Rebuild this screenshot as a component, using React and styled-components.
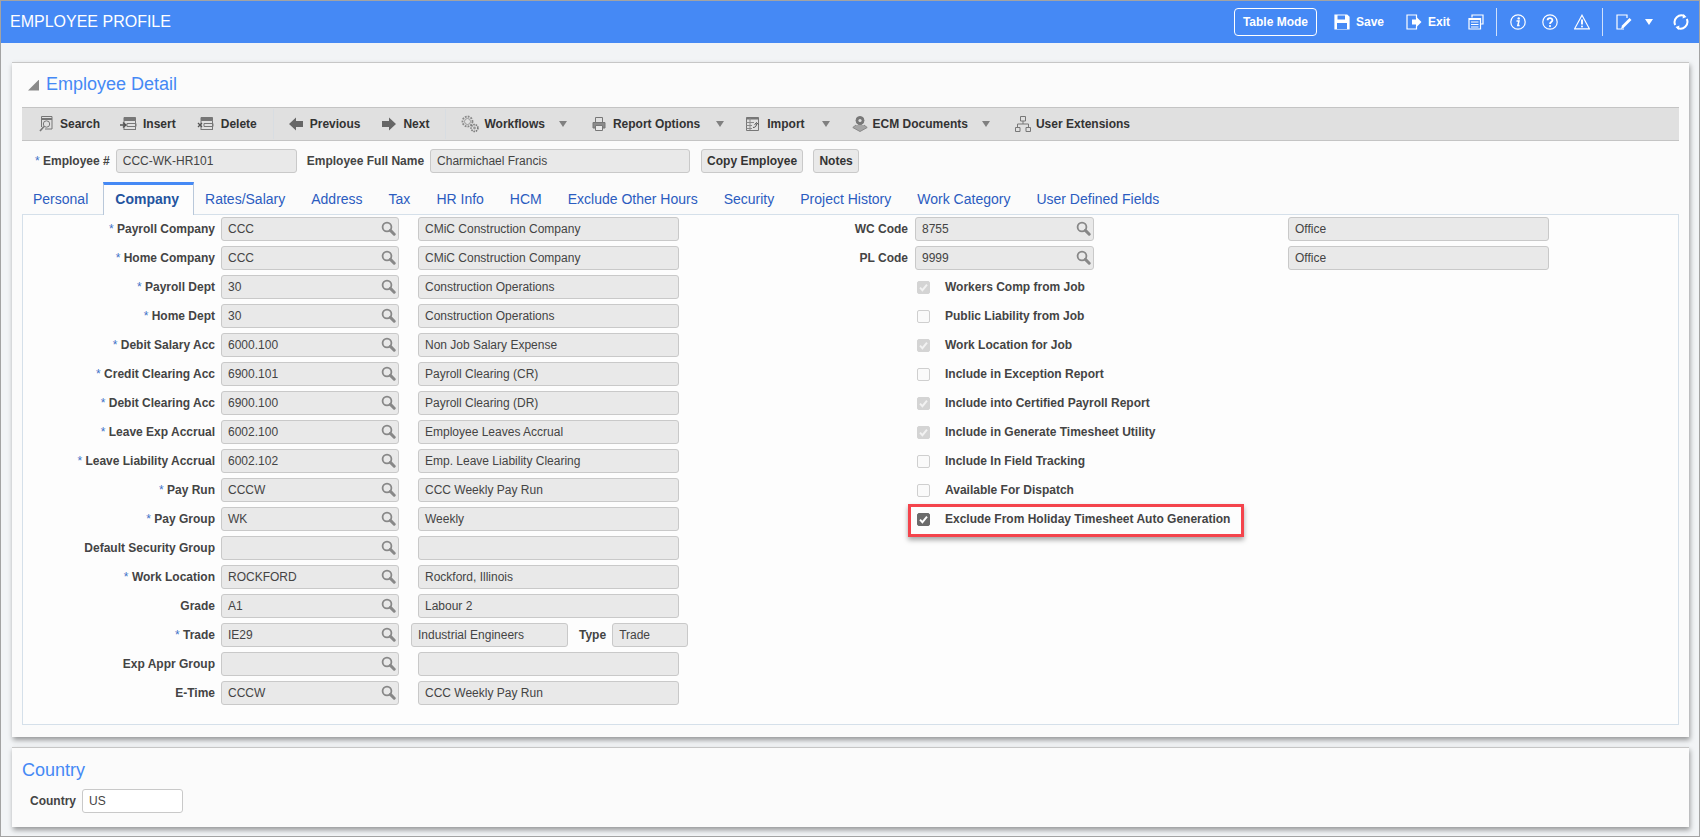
import React from "react";
import styled, { createGlobalStyle } from "styled-components";

const GlobalStyle = createGlobalStyle`
  html, body {
    margin: 0;
    padding: 0;
    background: #f2f4f6;
  }
  * {
    box-sizing: border-box;
  }
`;

const Page = styled.div`
  width: 1700px;
  height: 837px;
  border: 1px solid #a3a3a3;
  background: #f2f4f6;
  font-family: "Liberation Sans", Arial, sans-serif;
  overflow: hidden;
`;

const Header = styled.header`
  height: 42px;
  background: #4589f5;
  color: #fff;
  display: flex;
  align-items: center;
  padding-left: 9px;
`;

const HeaderTitle = styled.div`
  font-size: 16px;
  flex: 1;
`;

const HeaderActions = styled.div`
  display: flex;
  align-items: center;
  height: 100%;
`;

const TableModeButton = styled.button`
  width: 83px;
  height: 28px;
  margin-right: 17px;
  border: 1px solid #fff;
  border-radius: 4px;
  background: transparent;
  color: #fff;
  font: bold 12px "Liberation Sans", Arial, sans-serif;
  padding: 0;
`;

const HeaderAction = styled.div`
  display: flex;
  align-items: center;
  gap: ${(p) => p.$gap ?? 7}px;
  margin-right: ${(p) => p.$after ?? 16}px;
  font-size: 12px;
  font-weight: bold;
`;

const HeaderDivider = styled.div`
  width: 1px;
  height: 28px;
  background: #cfe0fb;
  margin-right: 13px;
`;

const Body = styled.main`
  padding: 19px 10px 0 11px;
  display: flex;
  flex-direction: column;
  gap: 10px;
`;

const Panel = styled.section`
  height: ${(p) => p.$height}px;
  background: #fbfbfb;
  border-top: 1px solid #c6c6c6;
  box-shadow: 1px 3px 5px rgba(0, 0, 0, 0.38);
  padding: 0 10px;
`;

const TitleRow = styled.div`
  height: 44px;
  display: flex;
  align-items: center;
  gap: 7px;
  padding: 0 0 1px 6px;
`;

const Disclosure = styled.span`
  width: 11px;
  height: 11px;
  margin-top: 1px;
  background: #8a8a8a;
  clip-path: polygon(100% 0, 100% 100%, 0 100%);
`;

const PanelTitle = styled.h2`
  margin: 0;
  font-size: 18px;
  font-weight: normal;
  color: #4589f5;
`;

const Toolbar = styled.div`
  height: 34px;
  background: #e0e0e0;
  border-top: 1px solid #c4c4c4;
  border-bottom: 1px solid #c4c4c4;
  display: flex;
  align-items: center;
  gap: 22px;
  padding-left: 17px;
`;

const ToolItem = styled.div`
  display: flex;
  align-items: center;
  gap: ${(p) => p.$gap ?? 7}px;
  margin-right: ${(p) => p.$after ?? 0}px;
  font-size: 12px;
  font-weight: bold;
  color: #333;
`;

const ToolDivider = styled.span`
  width: 1px;
  height: 30px;
  background: #d8dde2;
  margin: 0 -7px 0 -6px;
`;

const ToolCaret = styled.span`
  width: 0;
  height: 0;
  margin-left: 9px;
  border-left: 4.5px solid transparent;
  border-right: 4.5px solid transparent;
  border-top: 6px solid #808080;
`;

const EmployeeRow = styled.div`
  display: flex;
  align-items: center;
  margin-top: 8px;
  height: 24px;
  padding-left: 13px;
`;

const Label = styled.label`
  font-size: 12px;
  font-weight: bold;
  color: #444;
  white-space: nowrap;
  text-align: right;
  width: ${(p) => (p.$width ? `${p.$width}px` : "auto")};
  margin: ${(p) => p.$margin || "0 6px 0 0"};
  flex: none;
`;

const Star = styled.span`
  color: #3f72c8;
  font-weight: normal;
`;

const Field = styled.div`
  width: ${(p) => p.$width}px;
  height: 24px;
  flex: none;
  margin-left: ${(p) => p.$left || 0}px;
  display: flex;
  align-items: center;
  justify-content: space-between;
  padding: 0 2px 1px 6px;
  background: ${(p) => (p.$white ? "#fff" : "#e9e9e9")};
  border: 1px solid #c9c9c9;
  border-radius: 3px;
  font-size: 12px;
  color: #444;
  white-space: nowrap;
`;

const SmallButton = styled.button`
  height: 24px;
  width: ${(p) => p.$width}px;
  margin-left: ${(p) => p.$left}px;
  padding: 0;
  background: #e9e9e9;
  border: 1px solid #c9c9c9;
  border-radius: 3px;
  font: bold 12px "Liberation Sans", Arial, sans-serif;
  color: #333;
`;

const TabStrip = styled.div`
  display: flex;
  height: 32px;
  margin-top: 9px;
`;

const Tab = styled.div`
  font-size: 14px;
  color: #2b5cc0;
  padding: 1px 13px 0;
  display: flex;
  align-items: center;
  white-space: nowrap;

  &:first-child {
    padding-left: 11px;
  }
`;

const ActiveTab = styled(Tab)`
  position: relative;
  z-index: 1;
  height: 33px;
  margin: 0 -2px 0 2px;
  padding: 0 14px 2px 11px;
  font-weight: bold;
  color: #24549f;
  background: #fdfdfd;
  border-top: 3px solid #4589f5;
  border-left: 1px solid #b9c8da;
  border-right: 1px solid #b9c8da;
`;

const TabBody = styled.div`
  height: 511px;
  background: #fdfdfd;
  border: 1px solid #d5e0ea;
  padding-top: 2px;
  display: flex;
`;

const Column = styled.div`
  width: ${(p) => p.$width}px;
  flex: none;
  display: flex;
  flex-direction: column;
  gap: 5px;
`;

const FormRow = styled.div`
  display: flex;
  align-items: center;
  height: 24px;
`;

const CheckRow = styled.div`
  display: flex;
  align-items: center;
  flex: none;
  height: ${(p) => (p.$highlight ? 33 : 24)}px;
  margin-left: ${(p) => (p.$highlight ? 108 : 114)}px;
  padding-left: ${(p) => (p.$highlight ? 3 : 0)}px;
  font-size: 12px;
  font-weight: bold;
  color: #444;
  ${(p) =>
    p.$highlight &&
    `
    width: 336px;
    margin-top: -3px;
    margin-bottom: -6px;
    padding-bottom: 3px;
    border: 3px solid #f4444c;
    box-shadow: 0 3px 5px rgba(0, 0, 0, 0.35);
  `}
`;

const CheckBox = styled.span`
  width: 13px;
  height: 13px;
  margin: 0 15px 0 3px;
  flex: none;
  border-radius: 2px;
  border: 1px solid ${(p) => (p.$on ? (p.$active ? "#6b6b6b" : "#d4d4d4") : "#cfcfcf")};
  background: ${(p) => (p.$on ? (p.$active ? "#6b6b6b" : "#d4d4d4") : "#fafafa")};
  display: flex;
  align-items: center;
  justify-content: center;
`;

const CountryTitle = styled(PanelTitle)`
  height: 41px;
  padding-top: 11px;
  line-height: 22px;
`;

const CountryRow = styled.div`
  display: flex;
  align-items: center;
  padding-left: 8px;
`;

const MagnifierIcon = () => (
  <svg width="15" height="15" viewBox="0 0 15 15" fill="none">
    <circle cx="6" cy="6" r="4.4" stroke="#888" strokeWidth="1.8" />
    <path d="M9.4 9.4L13.2 13.2" stroke="#888" strokeWidth="3" strokeLinecap="round" />
  </svg>
);

const CheckMark = ({ active }) => (
  <svg width="11" height="11" viewBox="0 0 11 11" fill="none">
    <path d="M2 5.6L4.4 8.2L9 2.6" stroke={active ? "#fff" : "#f2f2f2"} strokeWidth="1.9" />
  </svg>
);

const ToolSvg = ({ w = 16, children }) => (
  <svg width={w} height="18" viewBox={`0 0 ${w} 18`} fill="none" stroke="#777" strokeWidth="1">
    {children}
  </svg>
);

const SearchDocIcon = () => (
  <ToolSvg w={14}>
    <path d="M2.5 12V1.5H13V14H6" />
    <path d="M2.5 4H13" strokeWidth="2" />
    <circle cx="7.5" cy="9" r="3.2" />
    <path d="M5 11.5L1 16" strokeWidth="1.6" />
  </ToolSvg>
);

const RowsIcon = ({ mark }) => (
  <ToolSvg w={17}>
    <path d="M4 2.5H15.5V5.5H4z" fill="#777" />
    <path d="M7 8.5H16V11.5H7z" />
    <path d="M4 14.5H15.5M4 5.5V15M15.5 5.5V15" />
    {mark === "arrow" ? (
      <path d="M0 10H4.5M3 7.5L5.8 10L3 12.5" stroke="#555" strokeWidth="1.6" />
    ) : (
      <path d="M1 8L5 12M5 8L1 12" stroke="#555" strokeWidth="1.3" />
    )}
  </ToolSvg>
);

const ArrowIcon = ({ dir }) => (
  <svg width="14" height="14" viewBox="0 0 14 14" fill="#666">
    <path d={dir === "left" ? "M7 0.5V4H14V10H7V13.5L0 7z" : "M7 0.5V4H0V10H7V13.5L14 7z"} />
  </svg>
);

const GearsIcon = () => (
  <ToolSvg w={18}>
    <circle cx="6.5" cy="6.5" r="5" stroke="#888" strokeWidth="1.8" strokeDasharray="1.8 1.1" />
    <circle cx="6.5" cy="6.5" r="3" stroke="#999" />
    <circle cx="13.5" cy="13" r="3.4" stroke="#777" strokeWidth="1.6" strokeDasharray="1.5 0.9" />
    <circle cx="13.5" cy="13" r="1.4" fill="#999" stroke="none" />
  </ToolSvg>
);

const PrinterIcon = () => (
  <ToolSvg w={14}>
    <path d="M3.5 7V2.5H10.5V7" />
    <path d="M1 7.5H13V13H1z" fill="#8b8b8b" />
    <path d="M3.5 10.5H10.5V15.5H3.5z" fill="#e8e8e8" />
  </ToolSvg>
);

const ImportIcon = () => (
  <ToolSvg w={13}>
    <path d="M0.5 2.5H12.5V15.5H0.5z" />
    <path d="M0.5 3.5H12.5" strokeWidth="2" />
    <path d="M0.5 7.5H8M0.5 10.5H6M0.5 13.5H6M4 3V15" stroke="#8a8a8a" />
    <path d="M7 12.5C10 12.5 10.5 10.5 10.5 8.5M8.6 9.8L10.5 7.5L12.6 9.8" stroke="#555" />
  </ToolSvg>
);

const EcmIcon = () => (
  <ToolSvg w={16}>
    <circle cx="8" cy="5.5" r="4" fill="#777" />
    <circle cx="8" cy="5.5" r="1.6" fill="#e0e0e0" stroke="none" />
    <path d="M6.5 9.5L8 13L9.5 9.5" fill="#777" />
    <path d="M4 10L0.8 12.5L8 16.5L15.2 12.5L12 10" fill="#a5a5a5" stroke="#888" />
  </ToolSvg>
);

const OrgIcon = () => (
  <ToolSvg w={16}>
    <path d="M5.5 1.5H10.5V6H5.5z" />
    <path d="M8 6V9M2.5 12.5V9H13.5V12.5" />
    <path d="M0.5 12.5H5V16.5H0.5zM11 12.5H15.5V16.5H11z" />
  </ToolSvg>
);

const HeadSvg = ({ children, size = 16 }) => (
  <svg width={size} height={size} viewBox="0 0 16 16" fill="none" stroke="#fff" strokeWidth="1.2">
    {children}
  </svg>
);

const SaveIcon = () => (
  <HeadSvg>
    <path d="M1 1H13L15 3V15H1z" fill="#fff" />
    <path d="M3.5 1.5H11V5.5H3.5z" fill="#4589f5" stroke="none" />
    <path d="M3 9H13V15H3z" fill="#4589f5" stroke="none" />
  </HeadSvg>
);

const ExitIcon = () => (
  <HeadSvg>
    <path d="M10.5 4V1H1V15H10.5V12" />
    <path d="M6 5.5H10V2.5L15.5 8L10 13.5V10.5H6z" fill="#fff" stroke="none" />
  </HeadSvg>
);

const WindowsIcon = () => (
  <HeadSvg>
    <path d="M4 3.5V1H15V10H13" />
    <path d="M1 4.5H12.5V15H1z" fill="#4589f5" />
    <path d="M1 5H12.5" strokeWidth="2" />
    <path d="M3 8H10.5M3 10.5H10.5M3 13H10.5" />
  </HeadSvg>
);

const InfoIcon = () => (
  <HeadSvg>
    <circle cx="8" cy="8" r="7.2" />
    <circle cx="8.7" cy="4.4" r="1.2" fill="#fff" stroke="none" />
    <path d="M6.5 7H9L7.8 11.6H9.6" strokeWidth="1.5" />
  </HeadSvg>
);

const HelpIcon = () => (
  <HeadSvg>
    <circle cx="8" cy="8" r="7.2" />
    <path d="M5.6 6.2C5.6 3.4 10.4 3.4 10.4 6.2C10.4 8 8 8 8 10" strokeWidth="1.8" />
    <circle cx="8" cy="12.1" r="1.1" fill="#fff" stroke="none" />
  </HeadSvg>
);

const WarningIcon = () => (
  <HeadSvg>
    <path d="M8 1.2L15.4 14.8H0.6z" />
    <path d="M8 5.5V10.5" strokeWidth="1.9" />
    <circle cx="8" cy="12.4" r="1" fill="#fff" stroke="none" />
  </HeadSvg>
);

const EditIcon = () => (
  <HeadSvg>
    <path d="M8 15H1V1H11V4" />
    <path d="M5 15L6 11.5L13.5 4L15.5 6L8 13.5z" fill="#fff" stroke="none" />
  </HeadSvg>
);

const RefreshIcon = () => (
  <HeadSvg>
    <path d="M2.2 11A6.8 6.8 0 0 1 11.5 2.2" strokeWidth="2" />
    <path d="M13.8 5A6.8 6.8 0 0 1 4.5 13.8" strokeWidth="2" />
    <path d="M10.5 0L13.5 3L9.5 4.5z M5.5 16L2.5 13L6.5 11.5z" fill="#fff" stroke="none" />
  </HeadSvg>
);

const HeaderCaret = styled.span`
  width: 0;
  height: 0;
  margin: 0 20px 0 -3px;
  border-left: 4.5px solid transparent;
  border-right: 4.5px solid transparent;
  border-top: 6px solid #fff;
`;

const tabs = [
  "Personal",
  "Company",
  "Rates/Salary",
  "Address",
  "Tax",
  "HR Info",
  "HCM",
  "Exclude Other Hours",
  "Security",
  "Project History",
  "Work Category",
  "User Defined Fields",
];

const companyFields = [
  { label: "Payroll Company", req: true, value: "CCC", desc: "CMiC Construction Company" },
  { label: "Home Company", req: true, value: "CCC", desc: "CMiC Construction Company" },
  { label: "Payroll Dept", req: true, value: "30", desc: "Construction Operations" },
  { label: "Home Dept", req: true, value: "30", desc: "Construction Operations" },
  { label: "Debit Salary Acc", req: true, value: "6000.100", desc: "Non Job Salary Expense" },
  { label: "Credit Clearing Acc", req: true, value: "6900.101", desc: "Payroll Clearing (CR)" },
  { label: "Debit Clearing Acc", req: true, value: "6900.100", desc: "Payroll Clearing (DR)" },
  { label: "Leave Exp Accrual", req: true, value: "6002.100", desc: "Employee Leaves Accrual" },
  { label: "Leave Liability Accrual", req: true, value: "6002.102", desc: "Emp. Leave Liability Clearing" },
  { label: "Pay Run", req: true, value: "CCCW", desc: "CCC Weekly Pay Run" },
  { label: "Pay Group", req: true, value: "WK", desc: "Weekly" },
  { label: "Default Security Group", value: "", desc: "" },
  { label: "Work Location", req: true, value: "ROCKFORD", desc: "Rockford, Illinois" },
  { label: "Grade", value: "A1", desc: "Labour 2" },
  { label: "Trade", req: true, value: "IE29", desc: "Industrial Engineers", type: "Trade" },
  { label: "Exp Appr Group", value: "", desc: "" },
  { label: "E-Time", value: "CCCW", desc: "CCC Weekly Pay Run" },
];

const codeFields = [
  { label: "WC Code", value: "8755", desc: "Office" },
  { label: "PL Code", value: "9999", desc: "Office" },
];

const checks = [
  { label: "Workers Comp from Job", on: true },
  { label: "Public Liability from Job" },
  { label: "Work Location for Job", on: true },
  { label: "Include in Exception Report" },
  { label: "Include into Certified Payroll Report", on: true },
  { label: "Include in Generate Timesheet Utility", on: true },
  { label: "Include In Field Tracking" },
  { label: "Available For Dispatch" },
  { label: "Exclude From Holiday Timesheet Auto Generation", on: true, active: true, highlight: true },
];

export default function App() {
  return (
    <Page>
      <GlobalStyle />
      <Header>
        <HeaderTitle>EMPLOYEE PROFILE</HeaderTitle>
        <HeaderActions>
          <TableModeButton>Table Mode</TableModeButton>
          <HeaderAction $after={22} $gap={6}>
            <SaveIcon />
            Save
          </HeaderAction>
          <HeaderAction $after={18} $gap={6}>
            <ExitIcon />
            Exit
          </HeaderAction>
          <HeaderAction $after={12}>
            <WindowsIcon />
          </HeaderAction>
          <HeaderDivider />
          <HeaderAction>
            <InfoIcon />
          </HeaderAction>
          <HeaderAction>
            <HelpIcon />
          </HeaderAction>
          <HeaderAction $after={12}>
            <WarningIcon />
          </HeaderAction>
          <HeaderDivider />
          <HeaderAction>
            <EditIcon />
          </HeaderAction>
          <HeaderCaret />
          <HeaderAction $after={10}>
            <RefreshIcon />
          </HeaderAction>
        </HeaderActions>
      </Header>

      <Body>
        <Panel $height={675}>
          <TitleRow>
            <Disclosure />
            <PanelTitle>Employee Detail</PanelTitle>
          </TitleRow>

          <Toolbar>
            <ToolItem $after={-2}><SearchDocIcon />Search</ToolItem>
            <ToolItem $gap={6} $after={-1}><RowsIcon mark="arrow" />Insert</ToolItem>
            <ToolItem><RowsIcon mark="x" />Delete</ToolItem>
            <ToolDivider />
            <ToolItem><ArrowIcon dir="left" />Previous</ToolItem>
            <ToolItem><ArrowIcon dir="right" />Next</ToolItem>
            <ToolDivider />
            <ToolItem $gap={5} $after={3}><GearsIcon />Workflows<ToolCaret /></ToolItem>
            <ToolItem><PrinterIcon />Report Options<ToolCaret /></ToolItem>
            <ToolItem $gap={8}><ImportIcon />Import<ToolCaret /></ToolItem>
            <ToolItem $gap={5} $after={3}><EcmIcon />ECM Documents<ToolCaret /></ToolItem>
            <ToolItem $gap={5}><OrgIcon />User Extensions</ToolItem>
          </Toolbar>

          <EmployeeRow>
            <Label><Star>* </Star>Employee #</Label>
            <Field $width={181}>CCC-WK-HR101</Field>
            <Label $margin="0 6px 0 10px">Employee Full Name</Label>
            <Field $width={260}>Charmichael Francis</Field>
            <SmallButton $width={102} $left={11}>Copy Employee</SmallButton>
            <SmallButton $width={46} $left={10}>Notes</SmallButton>
          </EmployeeRow>

          <TabStrip>
            {tabs.map((t) =>
              t === "Company" ? <ActiveTab key={t}>{t}</ActiveTab> : <Tab key={t}>{t}</Tab>
            )}
          </TabStrip>

          <TabBody>
            <Column $width={777}>
              {companyFields.map((f) => (
                <FormRow key={f.label}>
                  <Label $width={192}>
                    {f.req && <Star>* </Star>}
                    {f.label}
                  </Label>
                  <Field $width={178}>
                    <span>{f.value}</span>
                    <MagnifierIcon />
                  </Field>
                  {f.type ? (
                    <>
                      <Field $width={157} $left={12}>{f.desc}</Field>
                      <Label $margin="0 6px 0 11px">Type</Label>
                      <Field $width={76}>{f.type}</Field>
                    </>
                  ) : (
                    <Field $width={261} $left={19}>{f.desc}</Field>
                  )}
                </FormRow>
              ))}
            </Column>
            <Column $width={800}>
              {codeFields.map((f) => (
                <FormRow key={f.label}>
                  <Label $width={108} $margin="0 7px 0 0">{f.label}</Label>
                  <Field $width={179}>
                    <span>{f.value}</span>
                    <MagnifierIcon />
                  </Field>
                  <Field $width={261} $left={194}>{f.desc}</Field>
                </FormRow>
              ))}
              {checks.map((c) => (
                <CheckRow key={c.label} $highlight={c.highlight}>
                  <CheckBox $on={c.on} $active={c.active}>
                    {c.on && <CheckMark active={c.active} />}
                  </CheckBox>
                  {c.label}
                </CheckRow>
              ))}
            </Column>
          </TabBody>
        </Panel>

        <Panel $height={80}>
          <CountryTitle>Country</CountryTitle>
          <CountryRow>
            <Label>Country</Label>
            <Field $width={101} $white>US</Field>
          </CountryRow>
        </Panel>
      </Body>
    </Page>
  );
}
